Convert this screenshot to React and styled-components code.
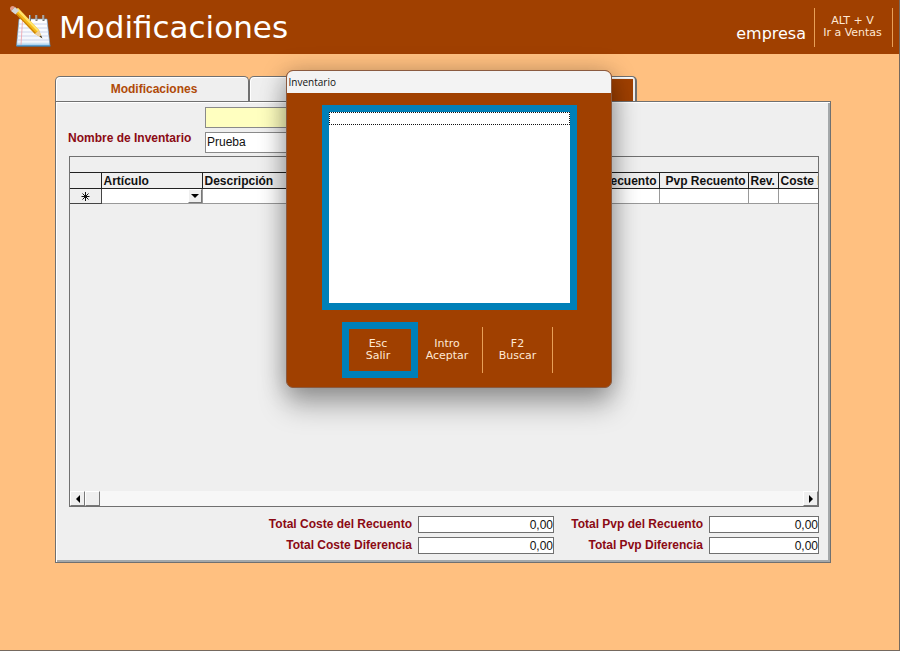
import { useState } from 'react';
import styled, { createGlobalStyle } from 'styled-components';

const tabs = ['Modificaciones', 'Artículos', 'Recuento'];

const columns = [
	{ label: '', width: 31 },
	{ label: 'Artículo', width: 101 },
	{ label: 'Descripción', width: 357 },
	{ label: 'Coste Recuento', width: 100, right: true },
	{ label: 'Pvp Recuento', width: 89, right: true },
	{ label: 'Rev.', width: 30 },
	{ label: 'Coste Diferencia', width: 110 },
];

const actions = [
	{ hotkey: 'Esc', label: 'Salir' },
	{ hotkey: 'Intro', label: 'Aceptar' },
	{ hotkey: 'F2', label: 'Buscar' },
];

const App = () => {
	const [tab, setTab] = useState('Recuento');
	const [name, setName] = useState('Prueba');

	return (
		<Page>
			<GlobalStyle />
			<Header>
				<NotepadIcon />
				<Title>Modificaciones</Title>
				<Company>empresa</Company>
				<SalesButton type="button">ALT + V<br />Ir a Ventas</SalesButton>
			</Header>

			<Main>
				<Tabs role="tablist">
					{tabs.map(item => (
						<Tab key={item} type="button" role="tab" aria-selected={tab === item} $active={tab === item} onClick={() => setTab(item)}>
							<span>{item}</span>
						</Tab>
					))}
				</Tabs>
				<Panel>
					<Form>
						<label htmlFor="name">Nombre de Inventario</label>
						<Fields>
							<Field $yellow aria-label="Inventario" />
							<Field id="name" value={name} onChange={e => setName(e.target.value)} />
						</Fields>
					</Form>

					<Grid>
						<GridBody>
							<Table>
								<colgroup>
									{columns.map(col => <col key={col.label} width={col.width} />)}
								</colgroup>
								<thead>
									<tr>
										{columns.map(col => <Th key={col.label} $right={col.right}>{col.label}</Th>)}
									</tr>
								</thead>
								<tbody>
									<tr>
										<RowMark><AsteriskIcon /></RowMark>
										<Td>
											<Combo type="button" aria-label="Elegir artículo"><Arrow /></Combo>
										</Td>
										<Td /><Td /><Td /><Td /><Td />
									</tr>
								</tbody>
							</Table>
						</GridBody>
						<ScrollBar>
							<ScrollButton type="button" aria-label="Izquierda"><Arrow $turn={90} /></ScrollButton>
							<Thumb />
							<ScrollButton type="button" aria-label="Derecha"><Arrow $turn={-90} /></ScrollButton>
						</ScrollBar>
					</Grid>

					<Totals>
						<label htmlFor="coste">Total Coste del Recuento</label>
						<Total id="coste" readOnly value="0,00" />
						<label htmlFor="pvp">Total Pvp del Recuento</label>
						<Total id="pvp" readOnly value="0,00" />
						<label htmlFor="costeDif">Total Coste Diferencia</label>
						<Total id="costeDif" readOnly value="0,00" />
						<label htmlFor="pvpDif">Total Pvp Diferencia</label>
						<Total id="pvpDif" readOnly value="0,00" />
					</Totals>
				</Panel>
			</Main>

			<Overlay>
				<Dialog role="dialog" aria-labelledby="dialogTitle">
					<DialogTitle id="dialogTitle">Inventario</DialogTitle>
					<List role="listbox" aria-label="Inventarios">
						<Item role="option" aria-selected="false" tabIndex={0} />
					</List>
					<Actions>
						{actions.map((action, i) => (
							<Action key={action.hotkey} type="button" $focused={i === 0}>
								{action.hotkey}<br />{action.label}
							</Action>
						))}
					</Actions>
				</Dialog>
			</Overlay>
		</Page>
	);
};

const NotepadIcon = () => (
	<svg width="42" height="44" viewBox="0 0 42 44" aria-hidden="true">
		<defs>
			<linearGradient id="sheet" x1="0" y1="0" x2="0" y2="1">
				<stop offset="0" stopColor="#fff" />
				<stop offset="0.85" stopColor="#f3f6fc" />
				<stop offset="1" stopColor="#8cc4ec" />
			</linearGradient>
		</defs>
		<path d="M9 14H37L40 41H6.500Z" fill="url(#sheet)" stroke="#5b9ed0" strokeWidth="0.6" />
		<path d="M6.500 41H40.500" stroke="#2f7fb8" strokeWidth="1.200" />
		<path d="M9 19H37.500M8.500 23H38M8 27H38.500M7.500 31H39M7 35H39" stroke="#c3cbe6" strokeWidth="0.800" />
		<path d="M12.500 15L11 40" stroke="#f0a0a8" strokeWidth="0.800" />
		<path d="M14 16V10M20 16V10M26.500 16V10M33.500 16V10" stroke="#777" strokeWidth="2" />
		<path d="M13.500 15V10M19.500 15V10M26 15V10M33 15V10" stroke="#ddd" strokeWidth="0.900" />
		<path d="M4 7L8 3L29 25L32 33L25 29Z" fill="#f5b916" />
		<path d="M6 4.500L8 3L29 25L27.500 26.500Z" fill="#ffe36b" />
		<path d="M4 7L5 6.500L26 28L25 29Z" fill="#c98008" />
		<path d="M25 29L29 25L32 33Z" fill="#ecd0a0" />
		<path d="M29.500 31.500L31 30.500L32.500 33.500Z" fill="#333" />
		<path d="M0 4Q0 1 3 1L5 2L1 6Z" fill="#e59a88" />
		<path d="M1 6L5 2L9 5.500L5.500 9.500Z" fill="#d5d8dc" />
	</svg>
);

const AsteriskIcon = () => (
	<svg width="9" height="9" viewBox="0 0 9 9" aria-label="Nuevo">
		<path d="M4.500 0V9M0.500 4.500H8.500M1.500 1.500L7.500 7.500M7.500 1.500L1.500 7.500" stroke="#111" />
	</svg>
);

const GlobalStyle = createGlobalStyle`
	*{
		box-sizing: border-box;
	}
	body{
		margin: 0;
		font-family: 'Liberation Sans', Arial, sans-serif;
		font-size: 12px;
		color: #111;
	}
	button, input{
		font: inherit;
		color: inherit;
		margin: 0;
		padding: 0;
		border-radius: 0;
	}
`;

const Page = styled.div`
	position: relative;
	min-height: 100vh;
	background: #ffc080;
	border-right: 1px solid #75695e;
	border-bottom: 1px solid #75695e;
`;

const Header = styled.header`
	display: flex;
	align-items: center;
	height: 54px;
	padding: 0 6px 0 10px;
	background: #a04000;
	color: #fff;
	font-family: 'DejaVu Sans', Verdana, sans-serif;
`;

const Title = styled.h1`
	flex: 1;
	margin: 0 0 0 7px;
	font-size: 31px;
	line-height: 40px;
	font-weight: 400;
`;

const Company = styled.span`
	margin: 14px 8px 0 0;
	font-size: 16px;
	line-height: 20px;
`;

const SalesButton = styled.button`
	width: 79px;
	height: 39px;
	padding-right: 2px;
	border: solid #e8a058;
	border-width: 0 1px;
	background: none;
	font-size: 11px;
	line-height: 12px;
	color: #ffe8d4;
`;

const Main = styled.main`
	padding: 22px 68px 22px 55px;
`;

const Tabs = styled.div`
	display: flex;
	height: 25px;
`;

const Tab = styled.button`
	width: 194px;
	border: 1px solid #707070;
	border-bottom: 0;
	border-right-width: ${props => props.$active ? '2px' : '1px'};
	border-radius: 5px 5px 0 0;
	box-shadow: inset 1px 1px 0 #fff;
	background: #efefef;
	padding: ${props => props.$active ? '2px 2px 0' : '0 0 0 4px'};
	font-weight: 700;
	color: #b04a08;
	span{
		display: flex;
		align-items: center;
		justify-content: center;
		height: 100%;
		background: ${props => props.$active ? '#a04000' : 'none'};
		color: ${props => props.$active ? '#fff' : 'inherit'};
	}
`;

const Panel = styled.section`
	padding: 5px 9px 8px 12px;
	background: #efefef;
	border: 1px solid #707070;
	box-shadow: inset 1px 1px 0 #fff, inset -2px -2px 0 #a4a8aa;
	label{
		font-weight: 700;
		color: #8b0a14;
	}
`;

const Form = styled.div`
	display: flex;
	align-items: center;
	label{
		width: 137px;
		margin-top: 16px;
	}
`;

const Fields = styled.div`
	display: grid;
	gap: 4px;
	width: 330px;
`;

const Field = styled.input`
	height: 21px;
	padding: 0 1px 2px;
	border: 1px solid #8a8a8a;
	background: ${props => props.$yellow ? '#ffffc0' : '#fff'};
`;

const Grid = styled.div`
	margin: 3px 2px 0 1px;
	border: 1px solid #707070;
`;

const GridBody = styled.div`
	height: 334px;
	padding-top: 15px;
	overflow: hidden;
`;

const Table = styled.table`
	table-layout: fixed;
	width: 818px;
	border-collapse: collapse;
	line-height: 14px;
`;

const Th = styled.th`
	height: 16px;
	padding: 0 2px;
	border: 1px solid #222;
	border-left: 0;
	text-align: ${props => props.$right ? 'right' : 'left'};
	white-space: nowrap;
	overflow: hidden;
`;

const Td = styled.td`
	height: 15px;
	padding: 0;
	border: 1px solid #999;
	border-left: 0;
	background: #fff;
`;

const RowMark = styled.th`
	height: 15px;
	padding: 0;
	border: 1px solid #444;
	border-left: 0;
	line-height: 0;
`;

const Combo = styled.button`
	display: flex;
	align-items: center;
	justify-content: center;
	width: 14px;
	height: 14px;
	margin-left: auto;
	border: 1px solid;
	border-color: #fff #777 #777 #fff;
	background: #efefef;
`;

const Arrow = styled.i`
	border: solid transparent;
	border-width: 4px 4px 0;
	border-top-color: #000;
	transform: rotate(${props => props.$turn || 0}deg);
`;

const ScrollBar = styled.div`
	display: flex;
	height: 15px;
	background: #f7f7f7;
`;

const ScrollButton = styled(Combo)`
	width: 15px;
	height: 15px;
	margin: 0;
	&:last-child{
		margin-left: auto;
	}
`;

const Thumb = styled.div`
	width: 15px;
	border: 1px solid;
	border-color: #fff #777 #777 #fff;
	background: #efefef;
`;

const Totals = styled.div`
	display: grid;
	grid-template-columns: 1fr 136px 143px 110px;
	gap: 4px 6px;
	margin: 9px 2px 0 0;
	line-height: 16px;
	label{
		text-align: right;
	}
`;

const Total = styled.input`
	width: 100%;
	height: 17px;
	border: 1px solid #707070;
	background: #fff;
	text-align: right;
`;

const Overlay = styled.div`
	position: absolute;
	inset: 70px 0 auto;
	display: flex;
	justify-content: center;
	padding-right: 2px;
`;

const Dialog = styled.div`
	width: 326px;
	height: 318px;
	overflow: hidden;
	border: 1px solid #8a5a40;
	border-radius: 7px;
	background: #a04000;
	box-shadow: 0 18px 28px rgba(0, 0, 0, 0.28), 0 2px 24px rgba(0, 0, 0, 0.26);
`;

const DialogTitle = styled.h2`
	height: 22px;
	margin: 0;
	padding: 0 2px;
	background: #f3f3f3;
	font: 400 10px/22px 'Open Sans', 'Segoe UI', sans-serif;
	color: #111;
`;

const List = styled.ul`
	height: 205px;
	margin: 12px 34px 0 35px;
	padding: 0;
	border: 7px solid #0080b8;
	background: #fff;
	list-style: none;
`;

const Item = styled.li`
	height: 13px;
	border: 1px dotted #111;
	outline: 0;
`;

const Actions = styled.div`
	display: flex;
	align-items: center;
	justify-content: center;
	margin: 12px 2px 0 0;
`;

const Action = styled.button`
	width: ${props => props.$focused ? '76px' : '70px'};
	height: ${props => props.$focused ? '56px' : '46px'};
	border: solid #e8a058;
	border-width: 0 1px 0 0;
	background: none;
	font: 11px/12px 'DejaVu Sans', Verdana, sans-serif;
	color: #ffe8d4;
	${props => props.$focused && `
		border: 7px solid #0080b8;
		padding-right: 4px;
		& + button{
			width: 65px;
			padding-right: 6px;
		}
	`}
`;

export default App;
